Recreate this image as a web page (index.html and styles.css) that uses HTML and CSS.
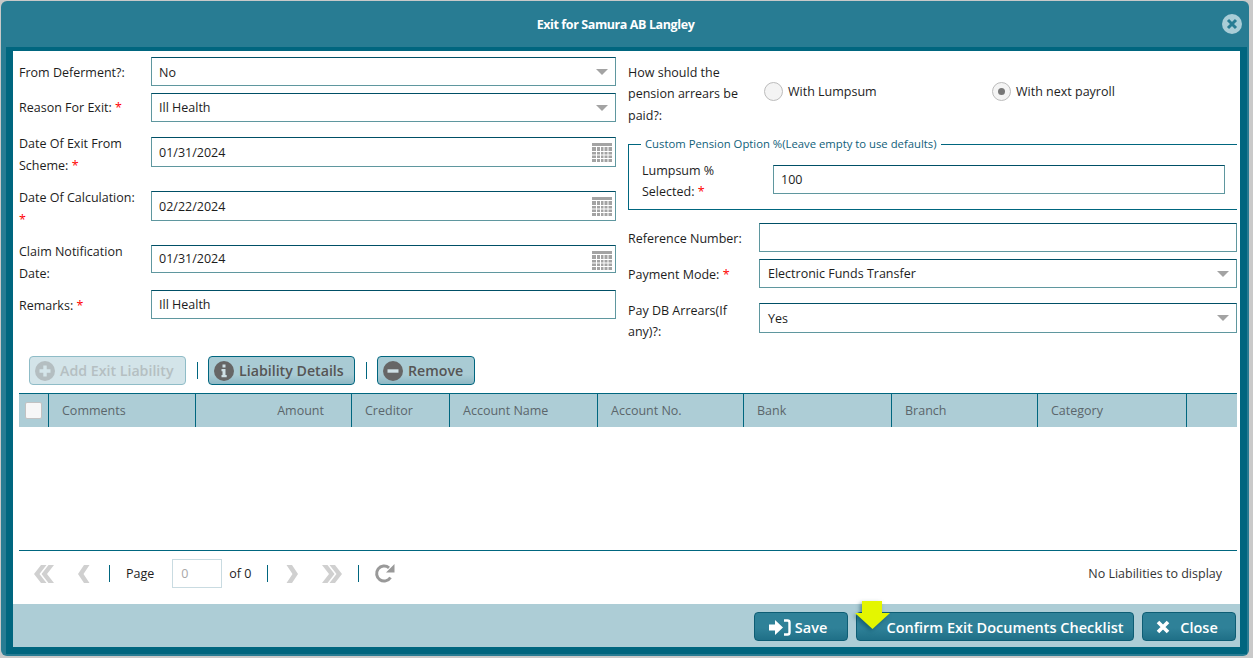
FILE: index.html
```html
<!DOCTYPE html>
<html>
<head>
    <meta charset="utf-8">
    <title>Exit</title>
    <link rel="stylesheet" href="styles.css">
</head>
<body>
    <div class="window">
        <div class="titlebar">
            <span class="title">Exit for Samura AB Langley</span>
            <svg class="close-x" width="20" height="20" viewBox="0 0 20 20"><circle cx="10" cy="10" r="10" fill="#a9cdd7"/><path d="M6 6l8 8M14 6l-8 8" stroke="#287c93" stroke-width="3"/></svg>
        </div>
        <div class="panel">
            <div class="form">
                <div class="col-left">
                    <div class="row row-first">
                        <div class="lbl">From Deferment?:</div>
                        <div class="field h29">No<span class="caret"></span></div>
                    </div>
                    <div class="row row-second">
                        <div class="lbl">Reason For Exit: <span class="req">*</span></div>
                        <div class="field h29">Ill Health<span class="caret"></span></div>
                    </div>
                    <div class="row tall row-exit">
                        <div class="lbl">Date Of Exit From Scheme: <span class="req">*</span></div>
                        <div class="field h30">01/31/2024
                            <svg class="cal" width="20" height="19" viewBox="0 0 20 19"><rect width="20" height="3" fill="#a3a3a3"/><path d="M0 4h20v15H0z" fill="#a3a3a3"/><path d="M0 8.500h20M0 12h20M0 15.500h20M4.500 4v15M8.500 4v15M12 4v15M16 4v15" stroke="#fff"/></svg>
                        </div>
                    </div>
                    <div class="row tall row-calc">
                        <div class="lbl">Date Of Calculation: <span class="req">*</span></div>
                        <div class="field h30">02/22/2024
                            <svg class="cal" width="20" height="19" viewBox="0 0 20 19"><rect width="20" height="3" fill="#a3a3a3"/><path d="M0 4h20v15H0z" fill="#a3a3a3"/><path d="M0 8.500h20M0 12h20M0 15.500h20M4.500 4v15M8.500 4v15M12 4v15M16 4v15" stroke="#fff"/></svg>
                        </div>
                    </div>
                    <div class="row tall row-claim">
                        <div class="lbl">Claim Notification Date:</div>
                        <div class="field h28 claim-date">01/31/2024
                            <svg class="cal" width="20" height="19" viewBox="0 0 20 19"><rect width="20" height="3" fill="#a3a3a3"/><path d="M0 4h20v15H0z" fill="#a3a3a3"/><path d="M0 8.500h20M0 12h20M0 15.500h20M4.500 4v15M8.500 4v15M12 4v15M16 4v15" stroke="#fff"/></svg>
                        </div>
                    </div>
                    <div class="row row-remarks">
                        <div class="lbl">Remarks: <span class="req">*</span></div>
                        <div class="field h29">Ill Health</div>
                    </div>
                </div>
                <div class="col-right">
                    <div class="arrears">
                        <div class="lbl-q">How should the pension arrears be paid?:</div>
                        <div class="radio-opt opt-one"><span class="radio"></span>With Lumpsum</div>
                        <div class="radio-opt"><span class="radio on"></span>With next payroll</div>
                    </div>
                    <fieldset class="custom">
                        <legend>Custom Pension Option %(Leave empty to use defaults)</legend>
                        <div class="custom-row">
                            <div class="lbl-lump">Lumpsum % Selected: <span class="req">*</span></div>
                            <div class="field h29">100</div>
                        </div>
                    </fieldset>
                    <div class="row row-ref">
                        <div class="lbl lbl-r">Reference Number:</div>
                        <div class="field h29"></div>
                    </div>
                    <div class="row row-pay">
                        <div class="lbl lbl-r">Payment Mode: <span class="req">*</span></div>
                        <div class="field h29">Electronic Funds Transfer<span class="caret"></span></div>
                    </div>
                    <div class="row row-db">
                        <div class="lbl lbl-r">Pay DB Arrears(If any)?:</div>
                        <div class="field h30">Yes<span class="caret"></span></div>
                    </div>
                </div>
            </div>

            <div class="toolbar">
                <div class="tbtn disabled btn-add">
                    <svg width="20" height="20" viewBox="0 0 20 20"><circle cx="10" cy="10" r="10" fill="#b4bec1"/><path d="M10 4.500v11M4.500 10h11" stroke="#d4e5ea" stroke-width="3.400"/></svg>
                    Add Exit Liability
                </div>
                <span class="sep"></span>
                <div class="tbtn btn-detail">
                    <svg width="20" height="20" viewBox="0 0 20 20"><circle cx="10" cy="10" r="10" fill="#666"/><path d="M8.500 3.500h3v3h-3zM7.500 8h4v6h1.200v2.200H7.500V14h1v-3.800h-1z" fill="#cfe0e5"/></svg>
                    Liability Details
                </div>
                <span class="sep"></span>
                <div class="tbtn btn-remove">
                    <svg width="20" height="20" viewBox="0 0 20 20"><circle cx="10" cy="10" r="10" fill="#666"/><path d="M4.500 10h11" stroke="#cfe0e5" stroke-width="3.400"/></svg>
                    Remove
                </div>
            </div>

            <div class="grid-head">
                <div class="th th-check"><span class="check"></span></div>
                <div class="th w147">Comments</div>
                <div class="th w156 right">Amount</div>
                <div class="th w98">Creditor</div>
                <div class="th w148">Account Name</div>
                <div class="th w146">Account No.</div>
                <div class="th w148">Bank</div>
                <div class="th w146">Branch</div>
                <div class="th w149">Category</div>
            </div>
            <div class="grid-body"></div>

            <div class="pager">
                <svg class="pg-first" width="21" height="20" viewBox="0 0 21 20"><path d="M8 1L1 10l7 9h5.500l-7-9 7-9zM15.500 1l-7 9 7 9H21l-7-9 7-9z" fill="#d0d0d0"/></svg>
                <svg class="pg-prev" width="13" height="20" viewBox="0 0 13 20"><path d="M7 1L1 10l6 9h5.500l-6-9 6-9z" fill="#d0d0d0"/></svg>
                <span class="sep pg-sep1"></span>
                <span class="pg-page">Page</span>
                <span class="pg-input">0</span>
                <span class="pg-of">of 0</span>
                <span class="sep pg-sep2"></span>
                <svg class="pg-next" width="13" height="20" viewBox="0 0 13 20"><path d="M6 1l6 9-6 9H.5l6-9-6-9z" fill="#d0d0d0"/></svg>
                <svg class="pg-last" width="21" height="20" viewBox="0 0 21 20"><path d="M13 1l7 9-7 9H7.500l7-9-7-9zM5.500 1l7 9-7 9H0l7-9-7-9z" fill="#d0d0d0"/></svg>
                <span class="sep pg-sep3"></span>
                <svg class="pg-refresh" width="21" height="21" viewBox="0 0 21 21"><path d="M16.500 14.500A7.500 7.500 0 1 1 15 4.800" fill="none" stroke="#999" stroke-width="3"/><path d="M20.500 1v8.500H12z" fill="#999"/></svg>
                <span class="pg-info">No Liabilities to display</span>
            </div>

            <div class="footer">
                <div class="fbtn btn-save">
                    <svg width="22" height="17" viewBox="0 0 22 17"><path d="M0 5.500h6V1l8 7.500L6 16v-4.500H0z" fill="#fff"/><path d="M15 1.500h3.500a2 2 0 0 1 2 2v10a2 2 0 0 1-2 2H15" fill="none" stroke="#fff" stroke-width="2.400"/></svg>
                    <span>Save</span>
                </div>
                <div class="fbtn btn-confirm">Confirm Exit Documents Checklist</div>
                <div class="fbtn btn-close">
                    <svg width="14" height="14" viewBox="0 0 14 14"><path d="M2 2l10 10M12 2L2 12" stroke="#fff" stroke-width="3.600"/></svg>
                    <span>Close</span>
                </div>
                <svg class="pointer" width="35" height="29" viewBox="0 0 35 29"><path d="M7 0h20v12h8L17.500 28 0 12h7z" fill="#e4f600"/></svg>
            </div>
        </div>
    </div>
</body>
</html>
```
FILE: styles.css
```css
html {
    background-color: #c9c9c9;
}
body {
    margin: 0;
    font-family: "Open Sans", "Liberation Sans", sans-serif;
    font-size: 12.5px;
    color: #1d1d1d;
}
.window {
    width: 1248px;
    height: 655px;
    margin: 1px 0 0 1px;
    background-color: #287c93;
    border-radius: 6px;
    box-sizing: border-box;
    padding: 0 2px 2px 5px;
    display: flex;
    flex-direction: column;
}
.titlebar {
    height: 46px;
    flex: none;
    position: relative;
    display: flex;
    align-items: center;
    justify-content: center;
    padding-right: 22px;
}
.title {
    color: white;
    font-weight: 700;
    font-size: 12.5px;
    letter-spacing: -0.4px;
}
.close-x {
    position: absolute;
    right: 5px;
    top: 13px;
}
.panel {
    flex: 1;
    background-color: white;
    border: solid #00667f;
    border-width: 4px 7px 7px 7px;
    display: flex;
    flex-direction: column;
    position: relative;
}
.form {
    height: 299px;
    flex: none;
    display: flex;
    padding: 6px 3px 0 6px;
    gap: 12px;
}
.col-left {
    width: 597px;
    flex: none;
}
.col-right {
    flex: 1;
}
.col-right .row .field {
    padding-left: 8px;
}
.row {
    display: flex;
    align-items: center;
}
.row-first .lbl,
.row-remarks .lbl,
.row-ref .lbl,
.row-pay .lbl {
    padding-top: 2px;
}
.row-first .field {
    padding-top: 1px;
}
.row-second {
    margin-top: 7px;
}
.tall {
    height: 44px;
    align-items: flex-start;
}
.tall .lbl {
    padding-top: 1px;
}
.tall .field {
    margin-top: 5px;
}
.claim-date {
    padding-left: 8px;
    padding-bottom: 2px;
}
.row-exit {
    margin-top: 10px;
}
.row-calc,
.row-claim {
    margin-top: 10px;
}
.row-remarks {
    margin-top: 6px;
}
.lbl {
    width: 132px;
    flex: none;
    line-height: 22px;
    padding-right: 10px;
    box-sizing: border-box;
}
.lbl-r {
    width: 131px;
}
.req {
    color: red;
}
.field {
    flex: 1;
    box-sizing: border-box;
    border: 1px solid #5f979f;
    border-top-color: #004f66;
    padding-left: 7px;
    display: flex;
    align-items: center;
    position: relative;
    background-color: white;
}
.h28 {
    height: 28px;
}
.h29 {
    height: 29px;
}
.h30 {
    height: 30px;
}
.caret {
    position: absolute;
    right: 7px;
    top: 11px;
    border-style: solid;
    border-width: 6px 6px 0 6px;
    border-color: #a3a3a3 transparent transparent transparent;
}
.cal {
    position: absolute;
    right: 3px;
    top: 5px;
}
.arrears {
    display: flex;
    align-items: center;
    height: 68px;
    margin-top: 3px;
}
.lbl-q {
    width: 136px;
    flex: none;
    line-height: 21.500px;
}
.radio-opt {
    display: flex;
    align-items: center;
    gap: 5px;
    margin-bottom: 5px;
}
.opt-one {
    width: 228px;
}
.radio {
    width: 17px;
    height: 17px;
    border: 1px solid #bcbcbc;
    border-radius: 50%;
    background-color: #f4f4f4;
    display: flex;
    align-items: center;
    justify-content: center;
}
.radio.on::after {
    content: "";
    width: 7px;
    height: 7px;
    border-radius: 50%;
    background-color: #777;
}
.custom {
    margin: 9px 0 0;
    padding: 10px 12px 0 13px;
    height: 73px;
    box-sizing: border-box;
    border: solid #00667f;
    border-width: 1px 0 1px 1px;
}
.custom legend {
    padding: 0 4px;
    margin-left: -1px;
    font-size: 11.300px;
    color: #10607a;
    line-height: 14px;
}
.custom-row {
    display: flex;
    align-items: flex-start;
    margin-top: -3px;
}
.custom-row .field {
    margin-top: 6.500px;
}
.lbl-lump {
    width: 131px;
    flex: none;
    line-height: 21px;
    padding: 2px 40px 0 0;
    box-sizing: border-box;
}
.row-ref {
    margin-top: 13px;
}
.row-pay {
    margin-top: 7px;
}
.row-db {
    margin-top: 15px;
    align-items: flex-start;
}
.row-db .lbl {
    line-height: 21px;
    margin-top: -3px;
}
.toolbar {
    height: 29px;
    flex: none;
    display: flex;
    align-items: center;
    gap: 11px;
    padding-left: 16px;
}
.tbtn {
    height: 29px;
    box-sizing: border-box;
    border: 1px solid #00667f;
    border-radius: 4px;
    background: linear-gradient(#a9cbd4, #a9cbd4 65%, #8fb8c4);
    color: #555;
    font-size: 14.200px;
    font-weight: 600;
    display: flex;
    align-items: center;
    gap: 5px;
    padding-left: 5px;
}
.tbtn.disabled {
    background: #d3e4e9;
    border-color: #8fbcc7;
    color: #b5bfc2;
}
.btn-add {
    width: 157px;
}
.btn-detail {
    width: 147px;
}
.btn-remove {
    width: 98px;
}
.sep {
    width: 1px;
    height: 17px;
    background-color: #00667f;
    flex: none;
}
.toolbar .sep {
    margin-right: -1px;
}
.grid-head {
    margin: 8px 3px 0 6px;
    height: 33px;
    flex: none;
    display: flex;
    background-color: #adcdd6;
    border-top: 1px solid #00667f;
    color: #5b666b;
    font-weight: 500;
}
.th {
    box-sizing: border-box;
    border-right: 1px solid #00667f;
    padding: 0 13px;
    display: flex;
    align-items: center;
}
.right {
    justify-content: flex-end;
    padding-right: 27px;
}
.th-check {
    width: 30px;
    padding: 0 0 0 6px;
}
.check {
    width: 15px;
    height: 15px;
    border: 1px solid #c2c2c2;
    border-radius: 2px;
    background-color: #f7f7f7;
}
.w98 {
    width: 98px;
}
.w146 {
    width: 146px;
}
.w147 {
    width: 147px;
}
.w148 {
    width: 148px;
}
.w149 {
    width: 149px;
}
.w156 {
    width: 156px;
}
.grid-body {
    height: 123px;
    flex: none;
    margin: 0 3px 0 6px;
    border-bottom: 1px solid #00667f;
}
.pager {
    height: 53px;
    box-sizing: border-box;
    flex: none;
    display: flex;
    align-items: center;
    padding: 0 18px 8px 20px;
}
.pg-prev {
    margin-left: 23px;
}
.pg-sep1 {
    margin-left: 19px;
}
.pg-page {
    margin-left: 16px;
}
.pg-input {
    width: 50px;
    height: 29px;
    box-sizing: border-box;
    margin-left: 18px;
    border: 1px solid #c9dbe1;
    color: #a8a8a8;
    padding-left: 8px;
    display: flex;
    align-items: center;
}
.pg-of {
    margin-left: 7px;
}
.pg-sep2 {
    margin-left: 16px;
}
.pg-next {
    margin-left: 18px;
}
.pg-last {
    margin-left: 23px;
}
.pg-sep3 {
    margin-left: 15px;
}
.pg-refresh {
    margin-left: 15px;
}
.pg-info {
    margin-left: auto;
    color: #333;
}
.footer {
    flex: 1;
    background-color: #adcdd6;
    display: flex;
    justify-content: flex-end;
    gap: 8px;
    padding: 8px 4px 0 0;
    position: relative;
}
.fbtn {
    height: 29px;
    box-sizing: border-box;
    border: 1px solid #0d5d74;
    border-radius: 4px;
    background: linear-gradient(#2f8198, #2f8198 55%, #1f6f87);
    color: white;
    font-size: 14.500px;
    font-weight: 600;
    display: flex;
    align-items: center;
    justify-content: center;
    gap: 6px;
    padding-top: 1px;
}
.btn-save,
.btn-close {
    width: 94px;
}
.btn-save {
    gap: 4px;
    padding-right: 6px;
}
.btn-close {
    gap: 10px;
    padding-right: 4px;
}
.btn-confirm {
    width: 278px;
    padding-left: 20px;
}
.pointer {
    position: absolute;
    top: -3px;
    right: 350px;
    filter: drop-shadow(-2px 2px 2px rgba(0, 60, 80, 0.5));
}
```
